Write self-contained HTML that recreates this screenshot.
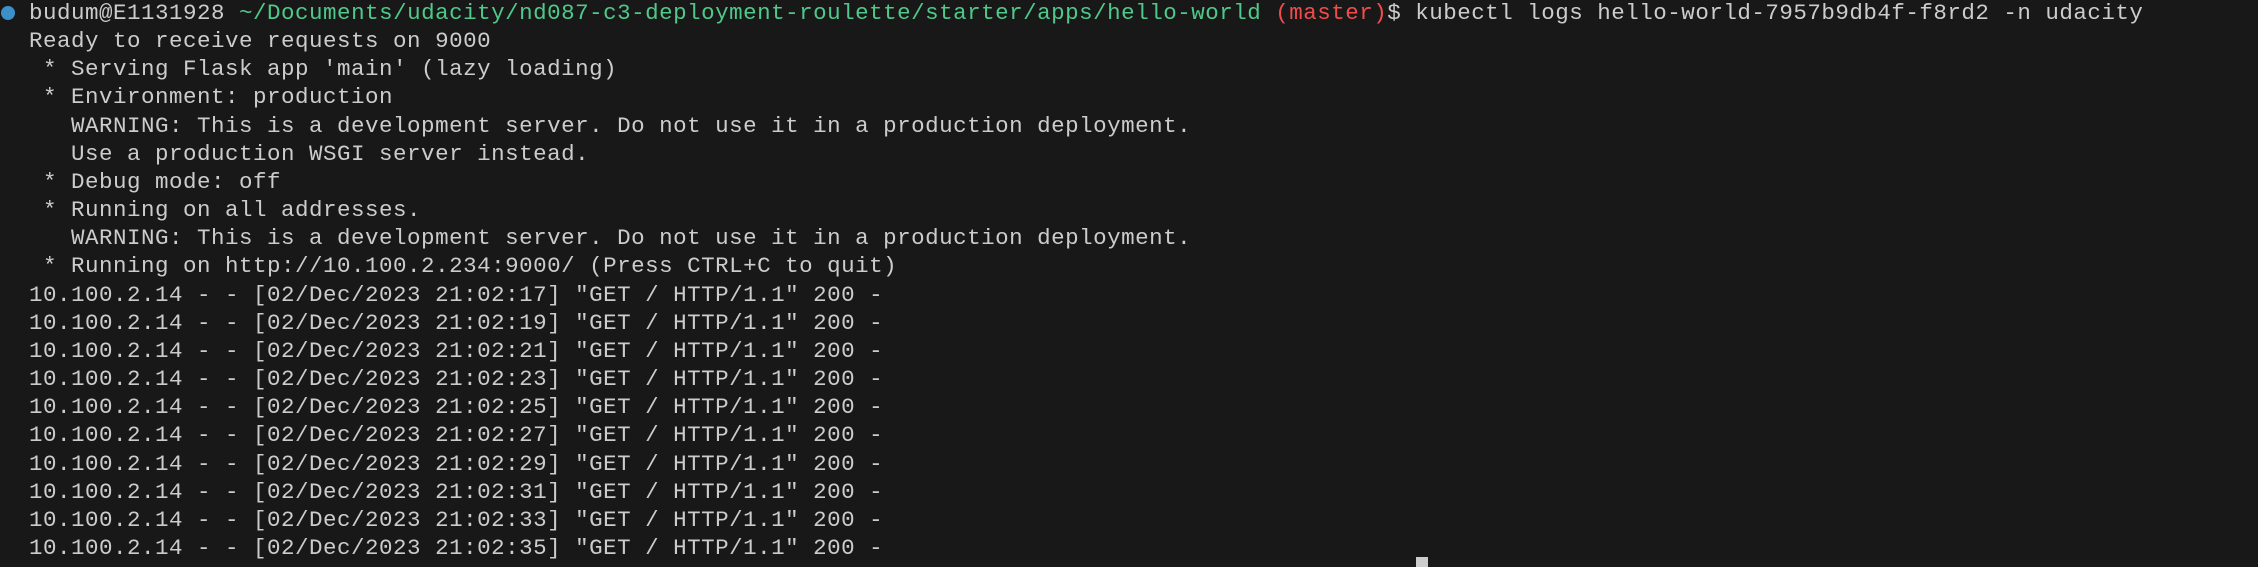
<!DOCTYPE html>
<html><head><meta charset="utf-8"><style>
html,body{margin:0;padding:0;background:#181818;width:2258px;height:564px;overflow:hidden}
pre{position:absolute;left:29px;top:-1px;margin:0;font-family:"Liberation Mono",monospace;font-size:22.5px;letter-spacing:0.5px;line-height:28.16px;color:#cccccc}
.g{color:#4ec98a}.r{color:#f14c4c}
.dot{position:absolute;left:1px;top:6px;width:14px;height:14px;border-radius:50%;background:#3d8fc9}
.cur{position:absolute;left:1416px;top:557px;width:12px;height:10px;background:#ccc}
</style></head><body>
<div class="dot"></div>
<pre>budum@E1131928 <span class="g">~/Documents/udacity/nd087-c3-deployment-roulette/starter/apps/hello-world</span> <span class="r">(master)</span>$ kubectl logs hello-world-7957b9db4f-f8rd2 -n udacity
Ready to receive requests on 9000
 * Serving Flask app 'main' (lazy loading)
 * Environment: production
   WARNING: This is a development server. Do not use it in a production deployment.
   Use a production WSGI server instead.
 * Debug mode: off
 * Running on all addresses.
   WARNING: This is a development server. Do not use it in a production deployment.
 * Running on http://10.100.2.234:9000/ (Press CTRL+C to quit)
10.100.2.14 - - [02/Dec/2023 21:02:17] "GET / HTTP/1.1" 200 -
10.100.2.14 - - [02/Dec/2023 21:02:19] "GET / HTTP/1.1" 200 -
10.100.2.14 - - [02/Dec/2023 21:02:21] "GET / HTTP/1.1" 200 -
10.100.2.14 - - [02/Dec/2023 21:02:23] "GET / HTTP/1.1" 200 -
10.100.2.14 - - [02/Dec/2023 21:02:25] "GET / HTTP/1.1" 200 -
10.100.2.14 - - [02/Dec/2023 21:02:27] "GET / HTTP/1.1" 200 -
10.100.2.14 - - [02/Dec/2023 21:02:29] "GET / HTTP/1.1" 200 -
10.100.2.14 - - [02/Dec/2023 21:02:31] "GET / HTTP/1.1" 200 -
10.100.2.14 - - [02/Dec/2023 21:02:33] "GET / HTTP/1.1" 200 -
10.100.2.14 - - [02/Dec/2023 21:02:35] "GET / HTTP/1.1" 200 -</pre>
<div class="cur"></div>
</body></html>
